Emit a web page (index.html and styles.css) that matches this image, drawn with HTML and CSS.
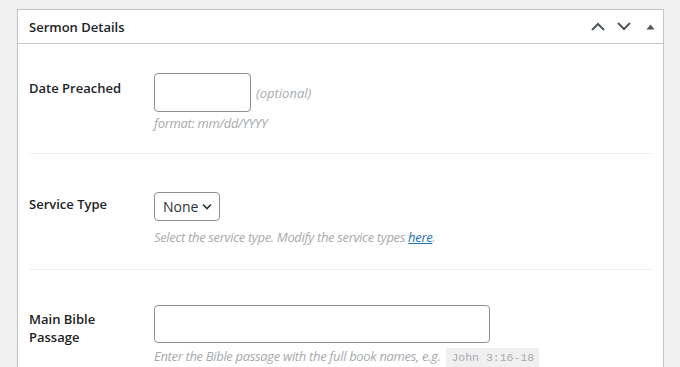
FILE: index.html
```html
<!DOCTYPE html>
<html lang="en">
<head>
    <meta charset="UTF-8" />
    <meta name="viewport" content="width=device-width, initial-scale=1.0"/>
    <title>Sermon Details</title>
    <link rel="stylesheet" href="styles.css">
</head>
<body>

<div class="postbox">
    <div class="postbox-header">
        <h2>Sermon Details</h2>
        <div class="handle-actions">
            <button class="handle" aria-label="Move up">
                <svg width="14" height="9" viewBox="0 0 14 9"><path d="M1 8 L7 2 L13 8" fill="none" stroke="#50575e" stroke-width="2"/></svg>
            </button>
            <button class="handle" aria-label="Move down">
                <svg width="14" height="9" viewBox="0 0 14 9"><path d="M1 1 L7 7 L13 1" fill="none" stroke="#50575e" stroke-width="2"/></svg>
            </button>
            <button class="handle toggle" aria-label="Toggle panel">
                <svg width="9" height="6" viewBox="0 0 9 6"><path d="M0.5 5.5 L4.5 0.5 L8.5 5.5 Z" fill="#50575e"/></svg>
            </button>
        </div>
    </div>

    <div class="inside">
        <div class="field-row row-date">
            <label class="field-label" for="date">Date Preached</label>
            <div class="field">
                <div class="inline">
                    <input type="text" id="date" class="input-date">
                    <span class="hint">(optional)</span>
                </div>
                <p class="description">format: mm/dd/YYYY</p>
            </div>
        </div>

        <div class="field-row row-service">
            <label class="field-label" for="service">Service Type</label>
            <div class="field">
                <div class="select-box" id="service">
                    <span>None</span>
                    <svg width="10" height="7" viewBox="0 0 10 7"><path d="M1 1.5 L5 5.5 L9 1.5" fill="none" stroke="#2c3338" stroke-width="1.7"/></svg>
                </div>
                <p class="description">Select the service type. Modify the service types <a href="#">here</a>.</p>
            </div>
        </div>

        <div class="field-row row-passage">
            <label class="field-label" for="passage">Main Bible<br>Passage</label>
            <div class="field">
                <input type="text" id="passage" class="input-passage">
                <p class="description">Enter the Bible passage with the full book names, e.g. <code>John 3:16-18</code></p>
            </div>
        </div>
    </div>
</div>

</body>
</html>
```

FILE: styles.css
```css
body {
    margin: 0;
    background: #f0f0f1;
    font-family: 'Open Sans', sans-serif;
    color: #1d2327;
    overflow: hidden;
}

.postbox {
    margin: 9px 0 0 17px;
    width: 645px;
    height: 400px;
    background: #fff;
    border: 1px solid #c3c4c7;
}

.postbox-header {
    display: flex;
    align-items: center;
    justify-content: space-between;
    height: 33px;
    padding-left: 11px;
    border-bottom: 1px solid #c3c4c7;
}

.postbox-header h2 {
    margin: 0;
    font-size: 13px;
    font-weight: 600;
}

.handle-actions {
    display: flex;
    align-items: center;
}

.handle {
    display: flex;
    align-items: center;
    justify-content: center;
    width: 26px;
    height: 33px;
    padding: 0;
    border: none;
    background: none;
}

.inside {
    padding: 0 11px;
}

.field-row {
    display: flex;
    border-bottom: 1px solid #f0f0f1;
}

.field-label {
    width: 125px;
    flex-shrink: 0;
    font-size: 13px;
    font-weight: 600;
    line-height: 18px;
}

.row-date {
    padding: 29px 0 21px;
}

.row-date .field-label {
    padding-top: 6px;
}

.row-service {
    padding: 38px 0 23px;
}

.row-service .field-label {
    padding-top: 3px;
}

.row-passage {
    padding: 35px 0 20px;
    border-bottom: none;
}

.row-passage .field-label {
    padding-top: 5px;
}

.inline {
    display: flex;
    align-items: center;
    gap: 5px;
}

input {
    box-sizing: border-box;
    border: 1px solid #8c8f94;
    border-radius: 4px;
    background: #fff;
    margin: 0;
}

.input-date {
    width: 97px;
    height: 39px;
}

.input-passage {
    width: 336px;
    height: 38px;
}

.hint {
    font-size: 13px;
    font-style: italic;
    color: #a7aaad;
}

.description {
    margin: 2px 0 0;
    font-size: 13px;
    font-style: italic;
    color: #a7aaad;
    line-height: 18px;
    letter-spacing: -0.33px;
}

.row-service .description {
    margin-top: 7px;
}

.row-passage .description {
    margin-top: 4px;
}

.description a {
    color: #2271b1;
}

.select-box {
    box-sizing: border-box;
    display: flex;
    align-items: center;
    gap: 4px;
    width: 66px;
    height: 29px;
    padding: 0 6px 0 8px;
    border: 1px solid #8c8f94;
    border-radius: 4px;
    font-size: 14px;
    color: #2c3338;
}

.select-box svg {
    flex-shrink: 0;
}

code {
    font-family: 'Liberation Mono', monospace;
    font-style: normal;
    font-size: 11.5px;
    letter-spacing: 0;
    background: #f0f0f1;
    padding: 3px 5px;
    margin-left: 3px;
}
```
